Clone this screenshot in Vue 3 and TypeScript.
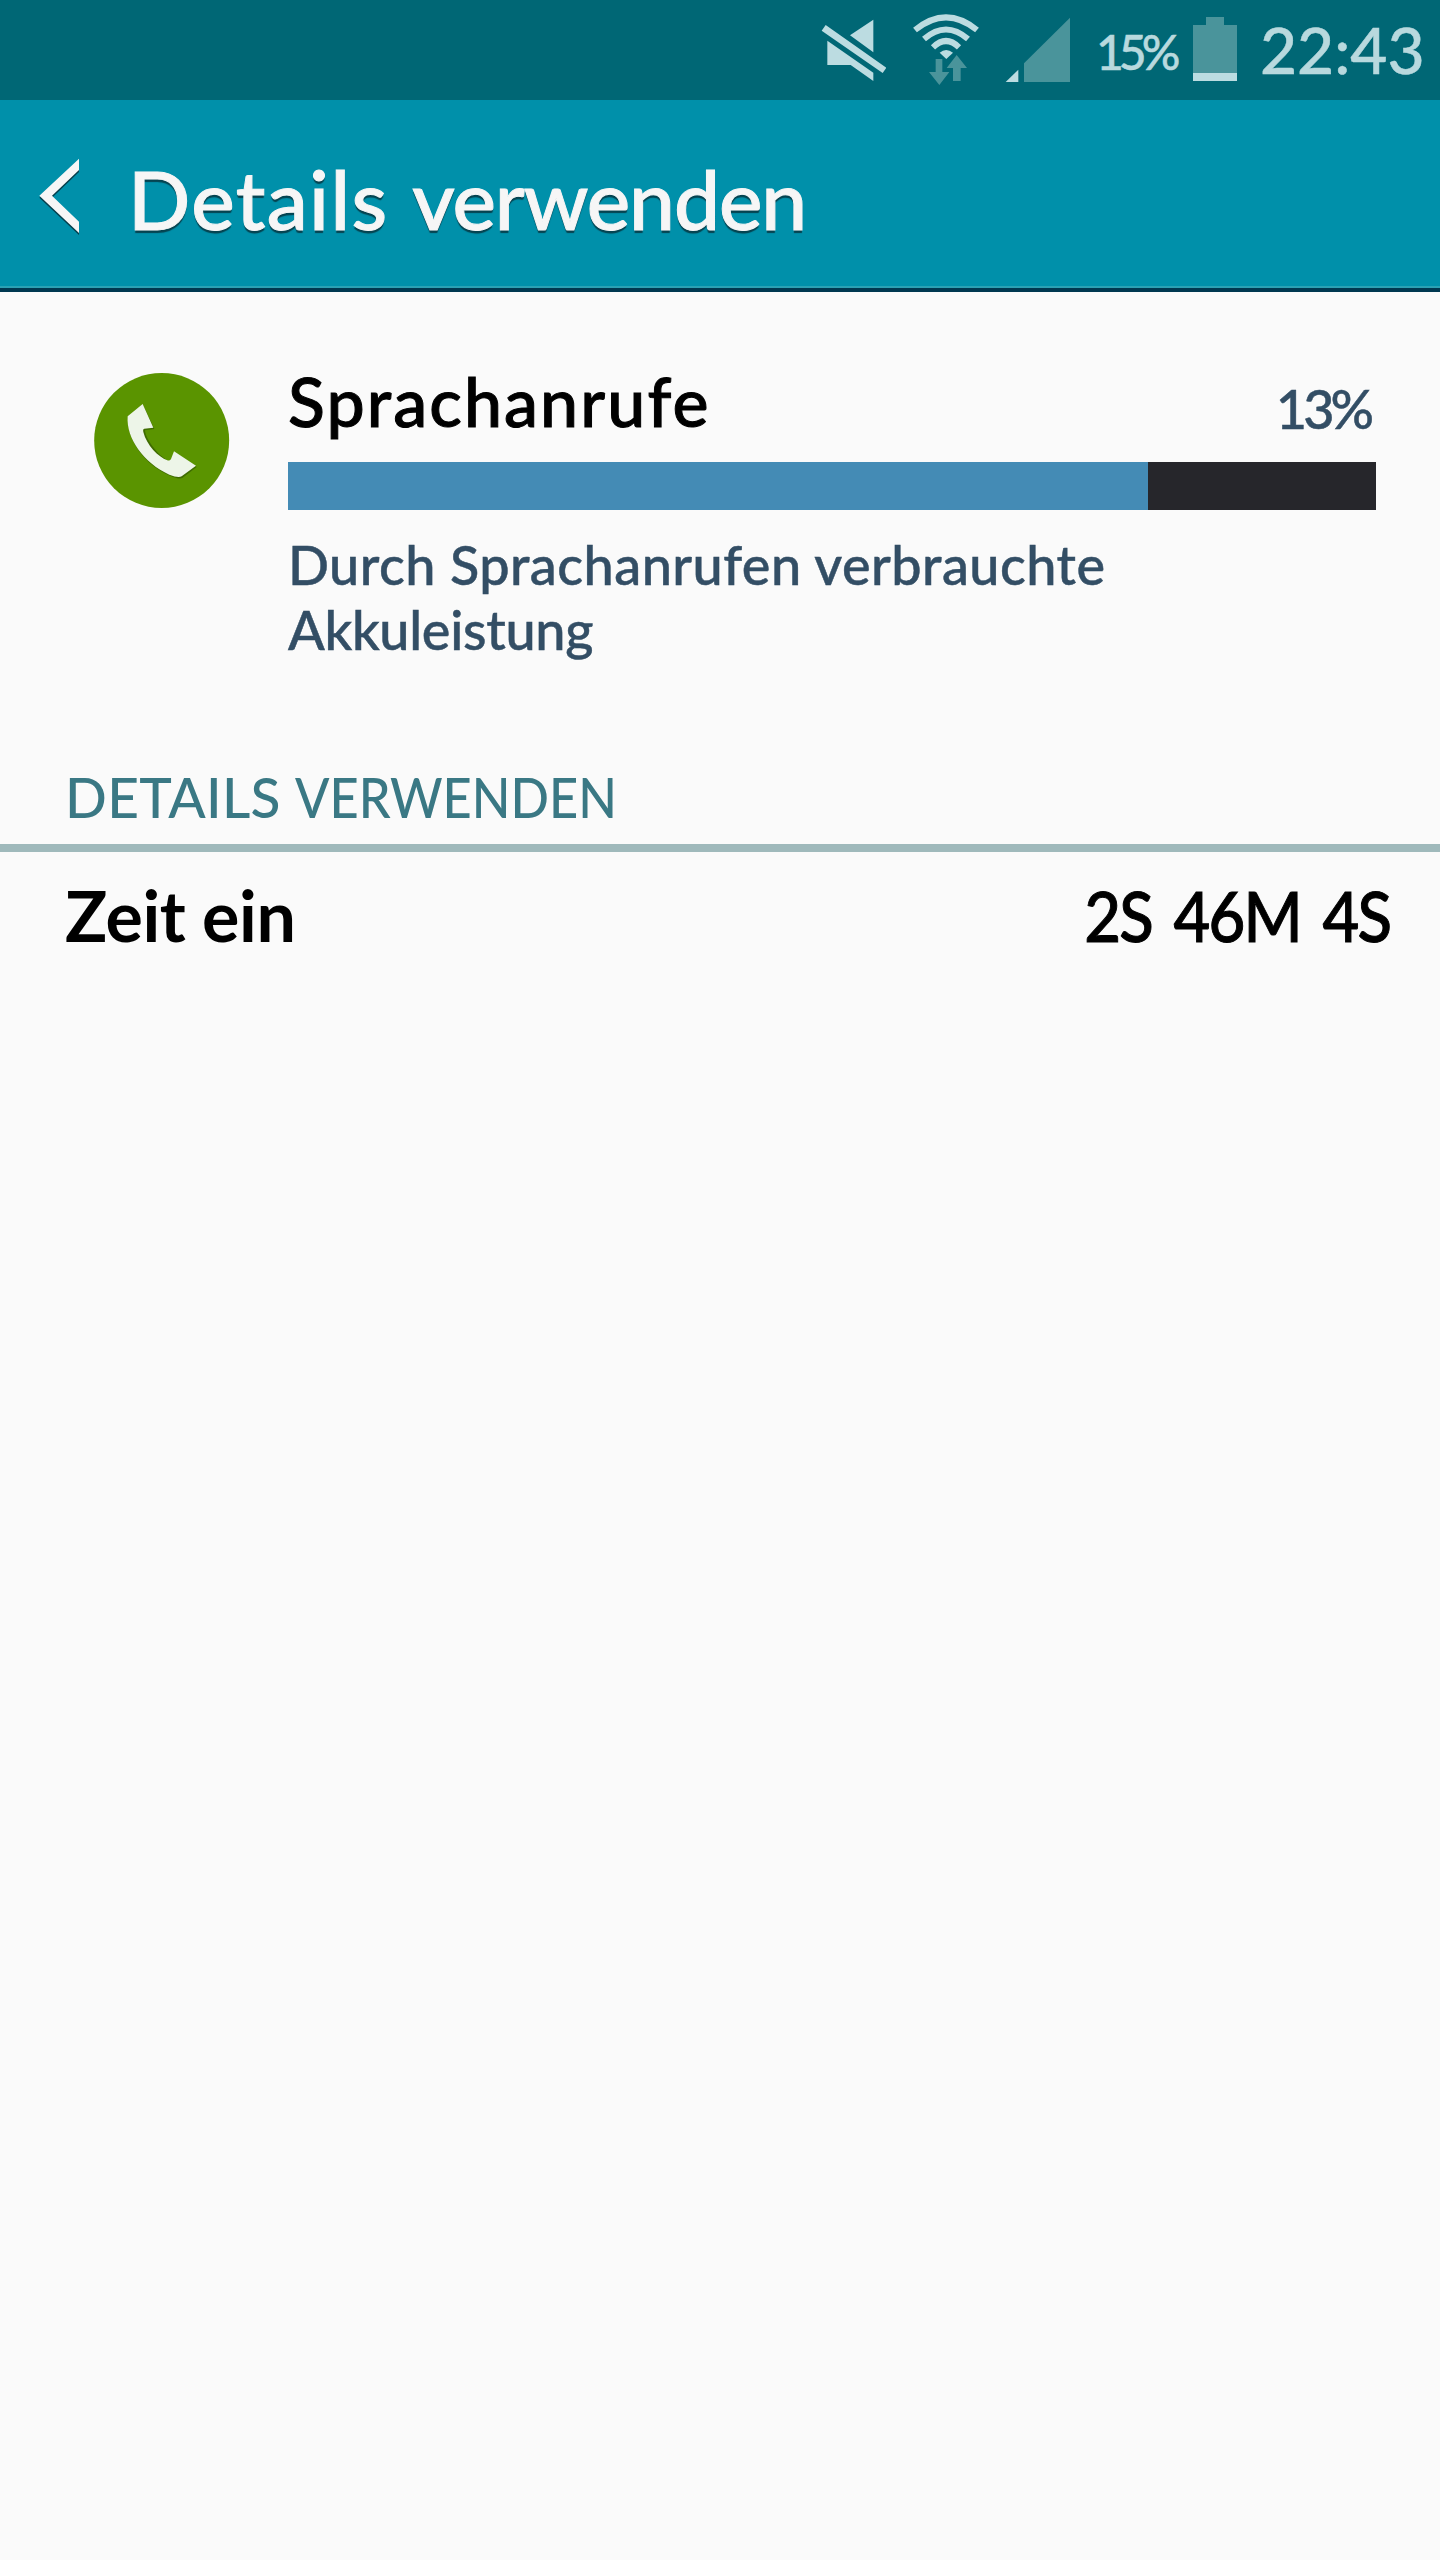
<script setup lang="ts">
interface DetailRow {
  label: string
  value: string
}

const app = { name: 'Sprachanrufe', percent: '13%', barFill: 79.05 }
const description = ['Durch Sprachanrufen verbrauchte', 'Akkuleistung']
const rows: DetailRow[] = [{ label: 'Zeit ein', value: '2S 46M 4S' }]
</script>

<template>
  <div class="screen">
    <header class="status">
      <svg class="mute" viewBox="60 57 198 189" width="66" height="63">
        <path fill="#bcdce1" d="M77 75 259 203 248 219 65 92ZM220 59V157L150 106ZM82 122 220 218V243L152 195H82Z" />
      </svg>
      <svg class="wifi" viewBox="336 39 204 219" width="68" height="73">
        <g fill="none" stroke="#bcdce1" stroke-width="18">
          <path d="M345 90Q438 14 531 90" />
          <path d="M372 117Q438 60 504 117" />
          <path d="M399 142Q438 104 477 142" />
        </g>
        <path fill="#bcdce1" d="M419 158Q438 142 459 158L439 177Z" />
        <path fill="#4a949b" d="M407 177H427V216H448L418 255 387 216H407ZM470 165 501 204H482V243H459V204H440Z" />
      </svg>
      <svg class="signal" viewBox="615 51 198 195" width="66" height="65">
        <path fill="#bcdce1" d="M655 209V246H617Z" />
        <path fill="#4a949b" d="M810 53V246H672V190Z" />
      </svg>
      <span class="battery-text">15%</span>
      <svg class="battery" viewBox="0 0 44 64" width="44" height="64">
        <path fill="#4a949b" d="M13 0H31V8H44V56H0V8H13Z" />
        <path fill="#bcdce1" d="M0 56H44V64H0Z" />
      </svg>
      <span class="clock">22:43</span>
    </header>

    <nav class="bar">
      <svg class="back" viewBox="117 204 120 231" width="40" height="77">
        <path fill="#053f4c" d="M237 212V246L156 323 237 400V435L118 323Z" />
        <path fill="#f6f6f6" d="M237 206V240L156 317 237 395V429L118 317Z" />
      </svg>
      <h1><span class="wide">Details</span> <span class="tight">verwenden</span></h1>
    </nav>

    <section class="usage">
      <svg class="app-icon" viewBox="72 68 408 408" width="136" height="136">
        <circle cx="275" cy="270.500" r="202.500" fill="#5a9400" />
        <path fill="#3f6c00" d="M220 165 253 236 225 240C226 268 272 325 302 335L314 307 380 350 337 383Q327 388 300 376C224 343 170 269 175 202Z" />
        <path fill="#edf5e8" d="M218 161 250 232 223 235Q218 236 220 245C230 285 265 320 292 330Q300 332 303 326L312 303 378 346 335 378Q325 384 298 373C222 339 168 265 173 198Z" />
      </svg>
      <div class="usage-body">
        <div class="usage-head">
          <span class="app-name">{{ app.name }}</span>
          <span class="percent">{{ app.percent }}</span>
        </div>
        <div class="track"><div class="fill" :style="{ width: app.barFill + '%' }"></div></div>
        <p class="description">
          <span class="first">{{ description[0] }}</span>
          <span class="second">{{ description[1] }}</span>
        </p>
      </div>
    </section>

    <h2><span class="section-first">DETAILS</span> <span class="section-second">VERWENDEN</span></h2>
    <div v-for="row in rows" :key="row.label" class="row">
      <span class="label">{{ row.label }}</span>
      <span class="value">{{ row.value }}</span>
    </div>
  </div>
</template>

<style>
body {
  margin: 0;
  background: #fafafa;
}
</style>

<style scoped>
.screen {
  width: 1440px;
  height: 2560px;
  overflow: hidden;
  background: #fafafa;
  font-family: Lato, "Open Sans", sans-serif;
  font-weight: 500;
  white-space: nowrap;
}
svg {
  display: block;
  flex: none;
}
.status {
  display: flex;
  align-items: flex-start;
  box-sizing: border-box;
  height: 100px;
  padding-left: 820px;
  background: #006775;
  color: #b8d9de;
}
.mute { margin-top: 19px; }
.wifi { margin: 13px 0 0 26px; }
.signal { margin: 17px 0 0 25px; }
.battery-text {
  box-sizing: border-box;
  width: 122px;
  padding-left: 25px;
  margin-top: 22px;
  font-size: 48px;
  line-height: 60px;
  letter-spacing: -5px;
  -webkit-text-stroke: 0.5px #b8d9de;
}
.battery { margin-top: 17px; }
.clock {
  margin: 15px 0 0 23px;
  font-size: 64px;
  line-height: 70px;
  -webkit-text-stroke: 0.5px #b8d9de;
}
.bar {
  display: flex;
  align-items: flex-start;
  box-sizing: border-box;
  height: 192px;
  padding-left: 39px;
  background: #0090aa;
  border-bottom: 4px solid #003850;
  box-shadow: inset 0 -2px #2aa1b4;
}
.back { margin-top: 58px; }
h1 {
  margin: 57px 0 0 49px;
  color: #f6f6f6;
  font-size: 82px;
  font-weight: 500;
  line-height: 82px;
  text-shadow: 0 3px 1px #054350;
  -webkit-text-stroke: 1px #f6f6f6;
}
.wide {
  margin-right: 3px;
  letter-spacing: 1.4px;
}
.tight { letter-spacing: -1.1px; }
.usage {
  display: flex;
  height: 396px;
  padding: 80px 64px 0 94px;
}
.app-icon { margin-top: 1px; }
.usage-body {
  flex: 1;
  margin-left: 58px;
}
.usage-head {
  display: flex;
  justify-content: space-between;
  align-items: flex-start;
  height: 90px;
}
.app-name {
  color: #000;
  font-size: 68px;
  line-height: 58px;
  letter-spacing: 2.1px;
  -webkit-text-stroke: 1px #000;
}
.percent {
  margin-right: 6px;
  color: #334e65;
  font-size: 54px;
  line-height: 73px;
  letter-spacing: -4px;
  -webkit-text-stroke: 0.5px #334e65;
}
.track {
  height: 48px;
  background: #26262b;
}
.fill {
  height: 48px;
  background: #448bb5;
}
.description {
  margin: 22px 0 0;
  color: #334e65;
  font-size: 54px;
  line-height: 65px;
  -webkit-text-stroke: 0.5px #334e65;
}
.description span { display: block; }
.first { letter-spacing: 0.45px; }
.second { letter-spacing: -0.3px; }
h2 {
  box-sizing: border-box;
  height: 84px;
  margin: 0;
  padding-left: 65px;
  border-bottom: 8px solid #9fb9bb;
  color: #3a7884;
  font-size: 55px;
  font-weight: 500;
  line-height: 58px;
}
.section-first { letter-spacing: 0.3px; }
.section-second {
  display: inline-block;
  transform: scaleX(0.92);
  transform-origin: left;
}
.row {
  display: flex;
  justify-content: space-between;
  padding: 28px 50px 0 65px;
  color: #000;
  font-size: 70px;
  line-height: 70px;
}
.label {
  font-weight: 700;
  letter-spacing: -0.4px;
}
.value {
  letter-spacing: -2px;
  word-spacing: 8px;
  transform: scaleX(0.907);
  transform-origin: right;
  -webkit-text-stroke: 1px #000;
}
</style>
